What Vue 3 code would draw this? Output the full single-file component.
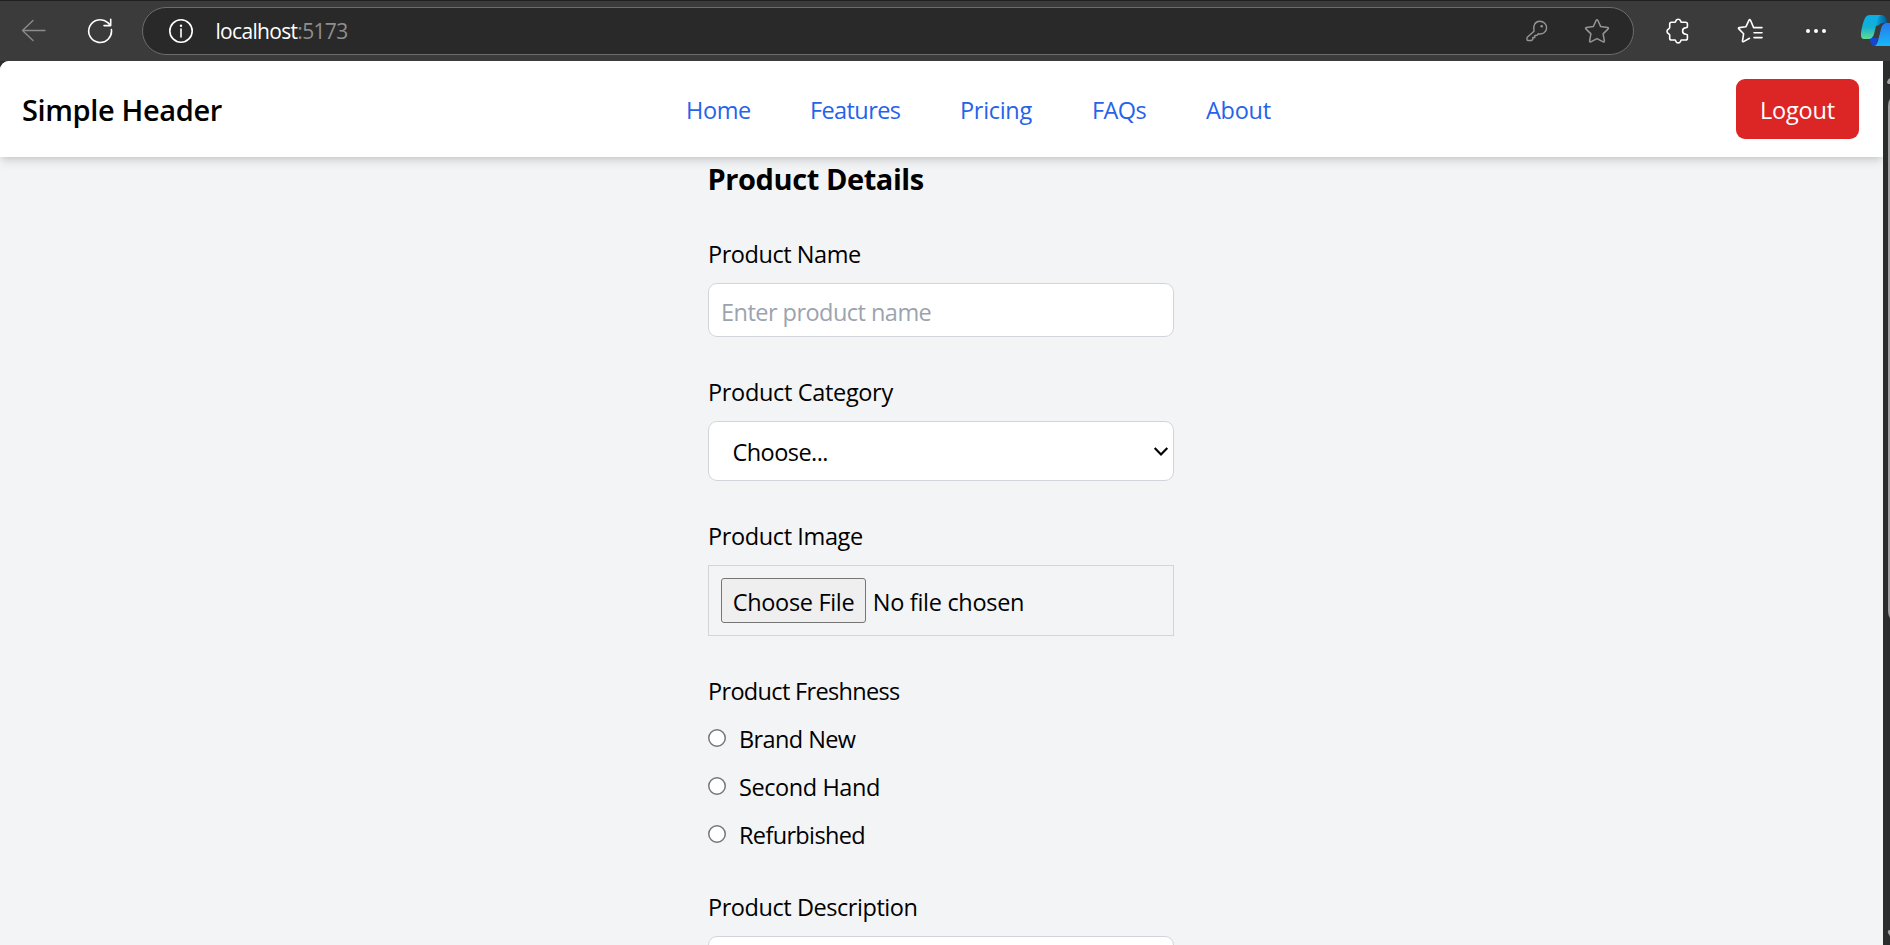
<script setup>
const links = [
  { label: 'Home', cls: 'l-home' },
  { label: 'Features', cls: 'l-features' },
  { label: 'Pricing', cls: 'l-pricing' },
  { label: 'FAQs', cls: 'l-faqs' },
  { label: 'About', cls: 'l-about' },
]
const freshness = [
  { label: 'Brand New', cls: 'r-new' },
  { label: 'Second Hand', cls: 'r-second' },
  { label: 'Refurbished', cls: 'r-refurb' },
]
</script>

<template>
  <div class="window">
    <div class="toolbar">
      <svg class="back" width="26" height="24" viewBox="0 0 26 24" fill="none" stroke="#8b8b8b" stroke-width="1.4" stroke-linecap="round" stroke-linejoin="round"><path d="M24 11.5H1.5M12 1.5L1.5 11.5L12 21.5" /></svg>
      <svg class="reload" width="26" height="26" viewBox="0 0 26 26" fill="none" stroke="#fff" stroke-width="1.6" stroke-linecap="round" stroke-linejoin="round"><path d="M24.4 11.5A11.4 11.4 0 1 1 20.8 4.7L23.6 7.4M23.7 1.2V7.6H17" /></svg>
      <div class="address">
        <svg class="info" width="26" height="26" viewBox="0 0 26 26" fill="none" stroke="#fff" stroke-width="1.6"><circle cx="13" cy="13" r="11.2" /><path d="M13 11v8" stroke-linecap="round" /><circle cx="13" cy="7.7" r="1.2" fill="#fff" stroke="none" /></svg>
        <span class="url">localhost<span class="port">:5173</span></span>
        <svg class="key" width="22" height="22" viewBox="0 0 22 22" fill="none" stroke="#959595" stroke-width="1.4" stroke-linejoin="round"><path d="M8 11.2C6.6 5.5 9.3 1.2 13.7 1.2C17.8 1.2 20.6 4.2 20.6 7.7C20.6 12 16.6 14.7 12.3 13.8L10.8 15.4H8.8V17.5H6.8V19.2L5.6 20.5H1.8C1.3 20.5 1 20.1 1 19.6V17.5Z" /><circle cx="15.7" cy="6.3" r="1.3" fill="#959595" stroke="none" /></svg>
        <svg class="star" width="26" height="26" viewBox="0 0 26 26" fill="none" stroke="#959595" stroke-width="1.5" stroke-linejoin="round"><path d="M12.2 2.3Q13 1 13.8 2.3L16.7 8.6L23.7 9.5Q25 9.9 24.1 10.9L19.1 15.9L20.4 23Q20.4 24.2 19.2 23.8L13 20.6L6.8 23.8Q5.6 24.2 5.6 23L6.9 15.9L1.9 10.9Q1 9.9 2.3 9.5L9.3 8.6Z" /></svg>
      </div>
      <svg class="puzzle" width="24" height="26" viewBox="0 0 24 26" fill="none" stroke="#fff" stroke-width="1.6" stroke-linejoin="round"><path d="M3.7 6Q3.7 4.2 5.5 4.2H8.9C9.6 4.2 9.5 3.6 9.8 2.9Q10.5 1.2 12.2 1.2T14.6 2.9C14.9 3.6 14.8 4.2 15.5 4.2H19.6Q21.4 4.2 21.4 6V8.8C21.4 9.6 20.8 9.7 20 9.7Q16.6 9.9 16.6 12.9T20 16.2C20.8 16.2 21.4 16.3 21.4 17.1V20.2Q21.4 22 19.6 22H15.5C14.8 22 14.9 22.6 14.6 23.2Q13.9 24.9 12.2 24.9T9.8 23.2C9.5 22.6 9.6 22 8.9 22H5.5Q3.7 22 3.7 20.2V17.2C3.7 16.3 3.3 16.2 2.6 15.8Q1 15 1 13.3T2.6 10.9C3.3 10.5 3.7 10.4 3.7 9.6Z" /></svg>
      <i class="sep"></i>
      <svg class="favorites" width="26" height="26" viewBox="0 0 26 26" fill="none" stroke="#fff" stroke-width="1.6" stroke-linecap="round" stroke-linejoin="round"><path d="M25 9.6H16.6L13.5 2.3Q12.7 1 11.9 2.3L9 8.7L2.2 9.6Q.9 9.9 1.8 10.9L6.6 15.8L5.5 22.8Q5.4 24.1 6.6 23.6L12.5 20.3M17 14.7H25M17 19.6H25" /></svg>
      <svg class="dots" width="22" height="6" viewBox="0 0 22 6" fill="#fff"><circle cx="3" cy="3" r="2" /><circle cx="11" cy="3" r="2" /><circle cx="19" cy="3" r="2" /></svg>
      <svg class="copilot" width="31" height="34" viewBox="0 0 31 34">
        <defs>
          <linearGradient id="ca" x1="0" y1="0" x2="0" y2="1"><stop offset="0" stop-color="#09aeea" /><stop offset=".5" stop-color="#14b0d2" /><stop offset="1" stop-color="#61dc91" /></linearGradient>
          <linearGradient id="cb" x1="0" y1="0" x2="0" y2="1"><stop offset="0" stop-color="#2878ed" /><stop offset="1" stop-color="#16b9f8" /></linearGradient>
          <linearGradient id="cc" x1="0" y1="0" x2="1" y2="0"><stop offset="0" stop-color="#08a9e8" /><stop offset="1" stop-color="#07507f" /></linearGradient>
        </defs>
        <path d="M16 1H21Q25 1 26.5 5L28 9H23Q20 9 19 11L16 12Z" fill="url(#cc)" />
        <path d="M9 24H18L16 32H15Q11.5 32 10.5 28Z" fill="#1745d2" />
        <path d="M10 1H21Q18.5 2 17.5 6L14 20Q12.8 25 8 25H4Q.5 25 1 19Q2.2 10 5 4Q6.5 1 10 1Z" fill="url(#ca)" />
        <path d="M22 9H31V32H15Q17 31 18 27L21 15Q22 10 26 9Z" fill="url(#cb)" />
      </svg>
    </div>

    <div class="viewport">
      <div class="page">
        <header class="header">
          <div class="brand">Simple Header</div>
          <nav class="nav">
            <a v-for="l in links" :key="l.label" :class="l.cls">{{ l.label }}</a>
          </nav>
          <button class="logout">Logout</button>
        </header>
        <main class="form">
          <h2 class="title">Product Details</h2>
          <section class="field">
            <label class="label w-name">Product Name</label>
            <input class="input" type="text" placeholder="Enter product name" />
          </section>
          <section class="field">
            <label class="label w-category">Product Category</label>
            <div class="select">
              <span class="choose">Choose...</span>
              <svg class="chevron" width="16" height="12" viewBox="0 0 16 12" fill="none" stroke="#000" stroke-width="2.2"><path d="M1.7 2L8 8.4L14.3 2" /></svg>
            </div>
          </section>
          <section class="field">
            <label class="label w-image">Product Image</label>
            <div class="file">
              <button class="file-btn">Choose File</button>
              <span class="none">No file chosen</span>
            </div>
          </section>
          <section class="field">
            <label class="label w-fresh">Product Freshness</label>
            <div v-for="f in freshness" :key="f.label" class="option">
              <svg class="radio" width="18" height="18" viewBox="0 0 18 18"><circle cx="9" cy="9" r="8.25" fill="#fff" stroke="#767676" stroke-width="1.5" /></svg>
              <span :class="f.cls">{{ f.label }}</span>
            </div>
          </section>
          <section class="field description">
            <label class="label w-desc">Product Description</label>
            <div class="area"></div>
          </section>
        </main>
      </div>
      <div class="scrollbar">
        <svg width="7" height="884" viewBox="0 0 7 884"><path d="M7 17Q5 18 4 21Q4 23 7 23Z" fill="#a3a3a3" /><path d="M5 45Q5 38 10 35V560Q5 557 5 550Z" fill="#9f9f9f" /><path d="M7 869H6Q4 870 5 872L7 875Z" fill="#a3a3a3" /></svg>
      </div>
    </div>
  </div>
</template>

<style>
html, body { margin: 0; overflow: hidden; background: #3b3b3b; }
</style>

<style scoped>
.window, .window * { box-sizing: border-box; }
.window { width: 1890px; height: 945px; overflow: hidden; display: flex; flex-direction: column; background: #3b3b3b; font-family: "Segoe UI", "Open Sans", "Noto Sans", sans-serif; font-size: 23.5px; line-height: 36px; color: #000; white-space: nowrap; }
svg { display: block; flex: none; }
.toolbar { height: 61px; flex: none; display: flex; align-items: center; border-top: 1px solid #202020; padding-left: 21px; }
.reload { margin-left: 40px; }
.address { width: 1492px; height: 48px; margin-left: 29px; border: 1px solid #6c6c6c; border-radius: 24px; background: #292929; display: flex; align-items: center; padding-left: 25px; flex: none; }
.url { margin-left: 21.5px; font-size: 21px; letter-spacing: -.68px; line-height: 44px; color: #fff; width: 1310.5px; }
.port { color: #8e8e8e; }
.key { margin-right: 36px; }
.puzzle { margin-left: 32px; }
.sep { width: 2px; height: 24px; background: #636363; margin-left: 24px; }
.favorites { margin-left: 23px; }
.dots { margin-left: 42px; }
.copilot { margin-left: 33px; }
.viewport { flex: 1; display: flex; background: #2b2c2c; min-height: 0; }
.page { width: 1883px; height: 884px; overflow: hidden; background: #f3f4f6; border-top-left-radius: 9px; }
.scrollbar { width: 7px; }
.header { position: relative; height: 96px; background: #fff; display: flex; align-items: center; justify-content: space-between; padding: 0 24px 0 22px; box-shadow: 0 6px 9px -1px rgba(0,0,0,.1), 0 3px 6px -2px rgba(0,0,0,.1); }
.brand { width: 664px; font-size: 29px; font-weight: 600; letter-spacing: -.37px; padding-top: 2px; }
.nav { flex: 1; display: flex; color: #2563eb; padding-top: 2px; }
.l-home { width: 124px; letter-spacing: -.4px; }
.l-features { width: 150px; letter-spacing: -.6px; }
.l-pricing { width: 132px; letter-spacing: -.3px; }
.l-faqs { width: 114px; letter-spacing: -.6px; }
.l-about { letter-spacing: -.25px; }
.logout { width: 123px; height: 60px; border: 0; border-radius: 9px; background: #dc2626; color: #fff; font: inherit; padding: 2px 0 0; letter-spacing: -.15px; }
.form { width: 466px; margin-left: 708px; }
.title { margin: 1px 0 0; height: 42px; line-height: 42px; font-size: 29px; font-weight: 700; letter-spacing: -.42px; margin-left: -.5px; }
.label { display: block; height: 36px; }
.field { margin-top: 37px; }
.title + .field, .description { margin-top: 36px; }
.w-name { letter-spacing: -.45px; }
.w-category { letter-spacing: -.33px; }
.w-image { letter-spacing: -.38px; }
.w-fresh { letter-spacing: -.67px; }
.w-desc { letter-spacing: -.44px; }
.input { display: block; width: 466px; height: 54px; margin-top: 11px; border: 1px solid #d1d5db; border-radius: 9px; padding: 3px 12px 0; font: inherit; letter-spacing: -.53px; background: #fff; outline: 0; }
.input::placeholder { color: #9ca3af; opacity: 1; }
.select { height: 60px; margin-top: 11px; border: 1px solid #d1d5db; border-radius: 9px; background: #fff; display: flex; align-items: center; justify-content: space-between; padding: 2px 4px 0 23.5px; }
.choose { letter-spacing: -.55px; }
.chevron { margin-bottom: 1px; }
.file { height: 71px; margin-top: 11px; border: 1px solid #d1d5db; display: flex; align-items: center; padding: 0 12px; gap: 6.8px; }
.file-btn { width: 145px; height: 45px; border: 1px solid #767676; border-radius: 3px; background: #efefef; font: inherit; letter-spacing: -.33px; color: #000; padding: 2px 0 0; }
.none { letter-spacing: -.3px; padding-top: 2px; }
.option { height: 36px; margin-top: 12px; display: flex; align-items: center; }
.radio { margin-right: 13px; margin-bottom: 3px; }
.r-new { letter-spacing: -.6px; }
.r-second { letter-spacing: -.42px; }
.r-refurb { letter-spacing: -.65px; }
.area { height: 120px; margin-top: 11px; border: 1px solid #d1d5db; border-radius: 9px; background: #fff; }
</style>
